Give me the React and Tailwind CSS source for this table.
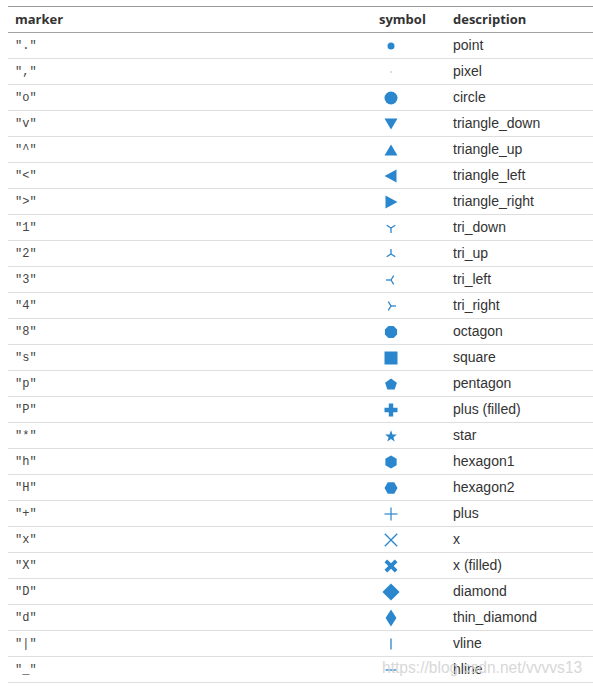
import React from "react";

const BLUE = "#2a86cd";

const poly = (n, r, rot) =>
  Array.from({ length: n }, (_, k) => {
    const a = ((rot + (360 / n) * k) * Math.PI) / 180;
    return `${(12 + r * Math.cos(a)).toFixed(2)},${(12 + r * Math.sin(a)).toFixed(2)}`;
  }).join(" ");

const star = () => {
  const pts = [];
  for (let k = 0; k < 10; k++) {
    const r = k % 2 === 0 ? 6.2 : 2.6;
    const a = ((-90 + 36 * k) * Math.PI) / 180;
    pts.push(`${(12 + r * Math.cos(a)).toFixed(2)},${(12.5 + r * Math.sin(a)).toFixed(2)}`);
  }
  return pts.join(" ");
};

const tri = (a, b, c) => (
  <g stroke={BLUE} strokeWidth="1.3" strokeLinecap="butt">
    <line x1="12" y1="12" x2={a[0]} y2={a[1]} />
    <line x1="12" y1="12" x2={b[0]} y2={b[1]} />
    <line x1="12" y1="12" x2={c[0]} y2={c[1]} />
  </g>
);

const shapes = {
  point: <circle cx="12" cy="12" r="3.5" fill={BLUE} />,
  pixel: <rect x="11.5" y="11.5" width="1" height="1" fill={BLUE} />,
  circle: <circle cx="12" cy="12" r="6.5" fill={BLUE} />,
  triangle_down: <polygon points="5.5,6.5 18.5,6.5 12,17.5" fill={BLUE} />,
  triangle_up: <polygon points="12,6.5 18.5,17.5 5.5,17.5" fill={BLUE} />,
  triangle_left: <polygon points="5.5,12 17.5,5.5 17.5,18.5" fill={BLUE} />,
  triangle_right: <polygon points="18.5,12 6.5,5.5 6.5,18.5" fill={BLUE} />,
  tri_down: tri([12, 17], [7.7, 9.3], [16.3, 9.3]),
  tri_up: tri([12, 7], [7.7, 14.7], [16.3, 14.7]),
  tri_left: tri([7, 12], [14.7, 7.7], [14.7, 16.3]),
  tri_right: tri([17, 12], [9.3, 7.7], [9.3, 16.3]),
  octagon: <polygon points={poly(8, 6.6, 22.5)} fill={BLUE} />,
  square: <rect x="5.5" y="5.5" width="13" height="13" fill={BLUE} />,
  pentagon: <polygon points={poly(5, 6.2, -90)} fill={BLUE} transform="translate(0 0.6)" />,
  "plus (filled)": (
    <polygon
      points="9.8,5.5 14.2,5.5 14.2,9.8 18.5,9.8 18.5,14.2 14.2,14.2 14.2,18.5 9.8,18.5 9.8,14.2 5.5,14.2 5.5,9.8 9.8,9.8"
      fill={BLUE}
    />
  ),
  star: <polygon points={star()} fill={BLUE} />,
  hexagon1: <polygon points={poly(6, 6.5, -90)} fill={BLUE} />,
  hexagon2: <polygon points={poly(6, 6.5, 0)} fill={BLUE} />,
  plus: (
    <g stroke={BLUE} strokeWidth="1.2">
      <line x1="5.5" y1="12" x2="18.5" y2="12" />
      <line x1="12" y1="5.5" x2="12" y2="18.5" />
    </g>
  ),
  x: (
    <g stroke={BLUE} strokeWidth="1.3">
      <line x1="5.8" y1="5.8" x2="18.2" y2="18.2" />
      <line x1="18.2" y1="5.8" x2="5.8" y2="18.2" />
    </g>
  ),
  "x (filled)": (
    <polygon
      points="5.5,8.2 8.2,5.5 12,9.3 15.8,5.5 18.5,8.2 14.7,12 18.5,15.8 15.8,18.5 12,14.7 8.2,18.5 5.5,15.8 9.3,12"
      fill={BLUE}
    />
  ),
  diamond: <polygon points="12,3.4 20.6,12 12,20.6 3.4,12" fill={BLUE} />,
  thin_diamond: <polygon points="12,3.4 17.4,12 12,20.6 6.6,12" fill={BLUE} />,
  vline: <line x1="12" y1="6.5" x2="12" y2="17.5" stroke={BLUE} strokeWidth="1.3" />,
  hline: <line x1="6.5" y1="12" x2="17.5" y2="12" stroke={BLUE} strokeWidth="1.3" />,
};

const rows = [
  [".", "point"],
  [",", "pixel"],
  ["o", "circle"],
  ["v", "triangle_down"],
  ["^", "triangle_up"],
  ["<", "triangle_left"],
  [">", "triangle_right"],
  ["1", "tri_down"],
  ["2", "tri_up"],
  ["3", "tri_left"],
  ["4", "tri_right"],
  ["8", "octagon"],
  ["s", "square"],
  ["p", "pentagon"],
  ["P", "plus (filled)"],
  ["*", "star"],
  ["h", "hexagon1"],
  ["H", "hexagon2"],
  ["+", "plus"],
  ["x", "x"],
  ["X", "x (filled)"],
  ["D", "diamond"],
  ["d", "thin_diamond"],
  ["|", "vline"],
  ["_", "hline"],
];

export default function App() {
  return (
    <div className="relative w-[593px] h-[686px] bg-white pt-[6px] pl-[8px] font-['Liberation_Sans',Arial,sans-serif] text-[#333]">
      <div className="w-[585px] border-t border-[#9a9a9a]">
        <div className="flex h-[26px] items-center border-b border-[#a3a3a3] font-['Open_Sans',sans-serif] text-[13px] font-bold">
          <div className="w-[364px] pl-[7px]">marker</div>
          <div className="w-[74px] pl-[7px]">symbol</div>
          <div className="flex-1 pl-[7px]">description</div>
        </div>
        {rows.map(([m, d]) => (
          <div key={m} className="flex h-[26px] items-center border-b border-[#dedede]">
            <div className="w-[364px] pl-[7px] font-['Liberation_Mono',monospace] text-[12px] text-[#444]">
              "{m}"
            </div>
            <div className="w-[74px] pl-[7px]">
              <svg width="24" height="24" viewBox="0 0 24 24" className="block">
                {shapes[d]}
              </svg>
            </div>
            <div className="flex-1 pl-[7px] text-[14px] text-[#333]">{d}</div>
          </div>
        ))}
      </div>
      <div className="absolute left-[382px] top-[657px] text-[15.6px] leading-[22px] text-[#d4d4d4] opacity-90">
        https://blog.csdn.net/vvvvs13
      </div>
    </div>
  );
}
